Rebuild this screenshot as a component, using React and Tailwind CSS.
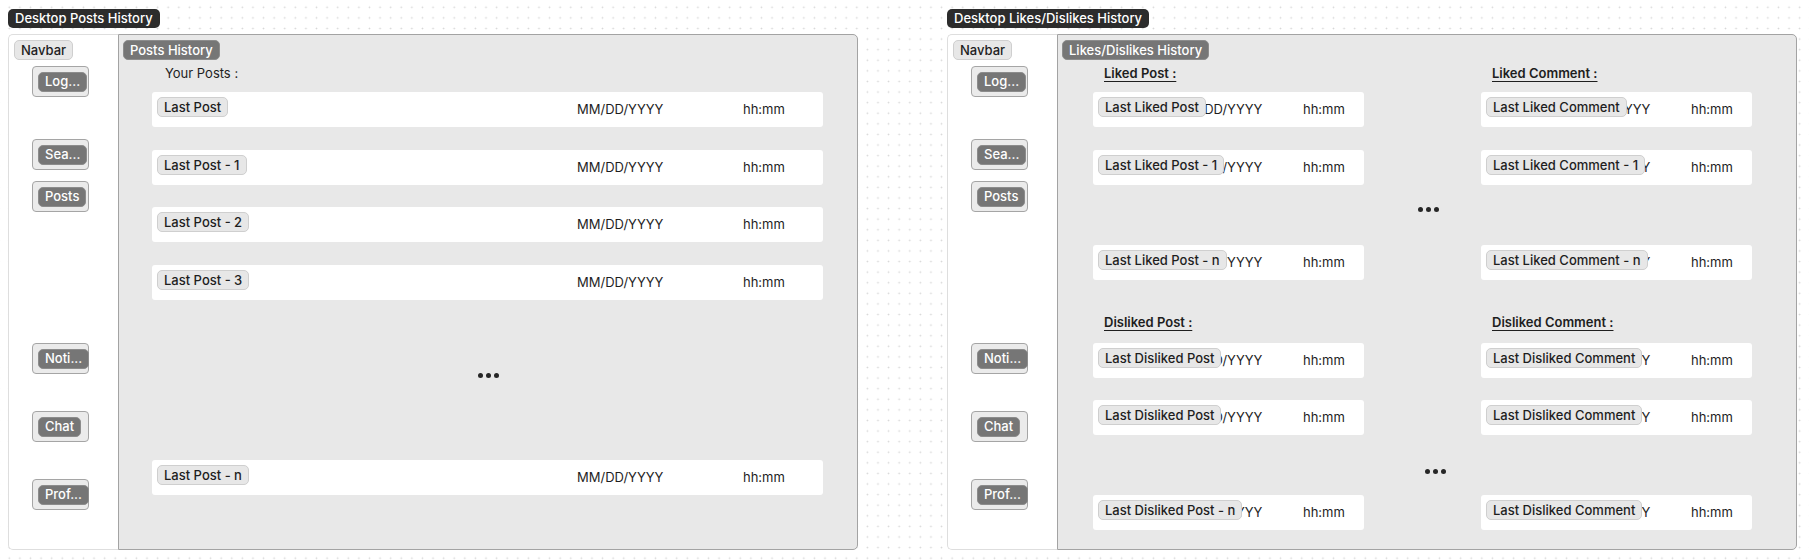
import React from "react";

const Chip = ({ children, dark = false }) => (
  <span
    className={
      dark
        ? "flex items-center h-[20px] px-[6px] rounded-[5px] border border-[#8c8c8c] bg-[#767676] text-white text-[13px] font-medium whitespace-nowrap leading-none"
        : "flex items-center h-[20px] px-[6px] rounded-[5px] border border-[#cfcfcf] bg-[#e7e7e7] text-[#1e1e1e] text-[13px] font-medium whitespace-nowrap leading-none"
    }
  >
    {children}
  </span>
);

const Dots = () => (
  <div className="flex gap-[3px]">
    <div className="w-[5px] h-[5px] rounded-full bg-[#262626]"></div>
    <div className="w-[5px] h-[5px] rounded-full bg-[#262626]"></div>
    <div className="w-[5px] h-[5px] rounded-full bg-[#262626]"></div>
  </div>
);

const NavButton = ({ label, mt }) => (
  <div
    className={`ml-[18px] w-[57px] h-[31px] flex items-center pl-[5px] rounded-[4px] border border-[#a5a5a5] bg-[#ebebeb] ${mt}`}
  >
    <Chip dark>{label}</Chip>
  </div>
);

// all margin classes written out so tailwind picks them up
const Navbar = () => (
  <div className="w-[110px] h-full shrink-0 bg-white border border-r-0 border-[#dedede] rounded-l-[5px] flex flex-col items-start pt-[5px] pl-[5px]">
    <Chip>Navbar</Chip>
    <NavButton label="Log..." mt="mt-[6px]" />
    <NavButton label="Sea..." mt="mt-[42px]" />
    <NavButton label="Posts" mt="mt-[11px]" />
    <NavButton label="Noti..." mt="mt-[131px]" />
    <NavButton label="Chat" mt="mt-[37px]" />
    <NavButton label="Prof..." mt="mt-[37px]" />
  </div>
);

const PostRow = ({ title, mt }) => (
  <div className={`relative ml-[33px] w-[671px] h-[35px] bg-white rounded-[3px] flex items-center text-[13px] text-[#1e1e1e] ${mt}`}>
    <span className="ml-[425px] w-[166px]">MM/DD/YYYY</span>
    <span>hh:mm</span>
    <div className="absolute left-[5px] top-[5px] flex">
      <Chip>{title}</Chip>
    </div>
  </div>
);

const SmallRow = ({ title }) => (
  <div className="relative w-[271px] h-[35px] bg-white rounded-[3px] flex items-center text-[13px] text-[#1e1e1e]">
    <span className="ml-[83px] w-[127px] whitespace-nowrap">MM/DD/YYYY</span>
    <span>hh:mm</span>
    <div className="absolute left-[5px] top-[5px] flex">
      <Chip>{title}</Chip>
    </div>
  </div>
);

const PairRow = ({ left, right, mt }) => (
  <div className={`flex ml-[35px] gap-[117px] ${mt}`}>
    <SmallRow title={left} />
    <SmallRow title={right} />
  </div>
);

const Heading = ({ children }) => (
  <span className="w-[271px] pl-[11px] text-[13px] font-semibold text-[#1e1e1e] underline underline-offset-[3px] decoration-[1px] leading-[16px]">
    {children}
  </span>
);

function PostsFrame() {
  return (
    <div className="flex flex-col items-start">
      <div className="h-[19px] px-[7px] flex items-center rounded-[5px] bg-[#2c2c2c] text-white text-[13px] font-medium">
        Desktop Posts History
      </div>
      <div className="mt-[6px] flex w-[850px] h-[516px]">
        <Navbar />
        <div className="flex-1 h-full bg-[#e8e8e8] border border-[#a3a3a3] rounded-r-[5px] flex flex-col items-start pt-[5px]">
          <div className="ml-[4px] flex">
            <Chip dark>Posts History</Chip>
          </div>
          <div className="ml-[46px] mt-[5px] text-[13px] leading-[16px] text-[#1e1e1e]">
            Your Posts :
          </div>
          <PostRow title="Last Post" mt="mt-[11px]" />
          <PostRow title="Last Post - 1" mt="mt-[23px]" />
          <PostRow title="Last Post - 2" mt="mt-[22px]" />
          <PostRow title="Last Post - 3" mt="mt-[23px]" />
          <div className="self-center mt-[73px]">
            <Dots />
          </div>
          <PostRow title="Last Post - n" mt="mt-[82px]" />
        </div>
      </div>
    </div>
  );
}

function LikesFrame() {
  return (
    <div className="flex flex-col items-start">
      <div className="h-[19px] px-[7px] flex items-center rounded-[5px] bg-[#2c2c2c] text-white text-[13px] font-medium">
        Desktop Likes/Dislikes History
      </div>
      <div className="mt-[6px] flex w-[850px] h-[516px]">
        <Navbar />
        <div className="flex-1 h-full bg-[#e8e8e8] border border-[#a3a3a3] rounded-r-[5px] flex flex-col items-start pt-[5px]">
          <div className="ml-[4px] flex">
            <Chip dark>Likes/Dislikes History</Chip>
          </div>
          <div className="flex ml-[35px] mt-[5px] gap-[117px]">
            <Heading>Liked Post :</Heading>
            <Heading>Liked Comment :</Heading>
          </div>
          <PairRow left="Last Liked Post" right="Last Liked Comment" mt="mt-[11px]" />
          <PairRow left="Last Liked Post - 1" right="Last Liked Comment - 1" mt="mt-[23px]" />
          <div className="ml-[360px] mt-[22px]">
            <Dots />
          </div>
          <PairRow left="Last Liked Post - n" right="Last Liked Comment - n" mt="mt-[33px]" />
          <div className="flex ml-[35px] mt-[34px] gap-[117px]">
            <Heading>Disliked Post :</Heading>
            <Heading>Disliked Comment :</Heading>
          </div>
          <PairRow left="Last Disliked Post" right="Last Disliked Comment" mt="mt-[13px]" />
          <PairRow left="Last Disliked Post" right="Last Disliked Comment" mt="mt-[22px]" />
          <div className="ml-[367px] mt-[34px]">
            <Dots />
          </div>
          <PairRow left="Last Disliked Post - n" right="Last Disliked Comment" mt="mt-[21px]" />
        </div>
      </div>
    </div>
  );
}

export default function App() {
  return (
    <div className="w-[1809px] h-[560px] overflow-hidden bg-white bg-[radial-gradient(circle,#d6d6d6_0.7px,transparent_1.1px)] bg-[length:10.6px_10.6px] bg-[position:4px_2px] font-['Inter',sans-serif] antialiased">
      <div className="flex gap-[89px] pl-[8px] pt-[9px]">
        <PostsFrame />
        <LikesFrame />
      </div>
    </div>
  );
}
